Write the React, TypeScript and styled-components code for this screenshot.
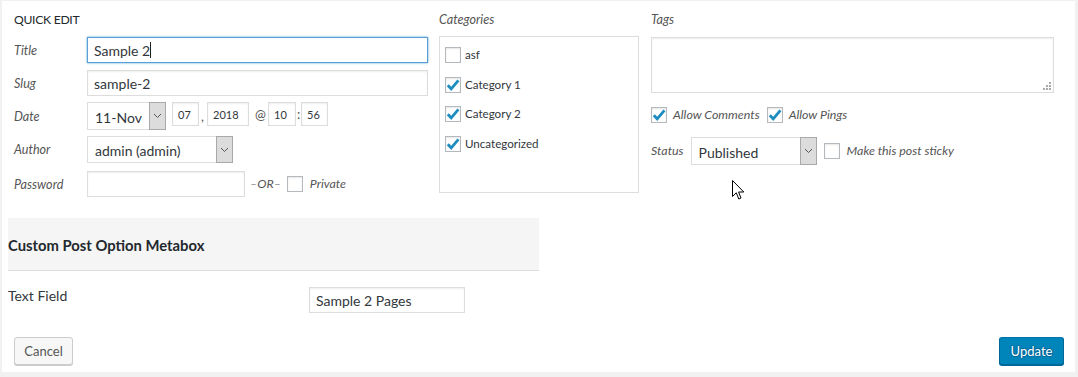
import React from "react";
import styled, { createGlobalStyle, css } from "styled-components";

const GlobalStyle = createGlobalStyle`
  html, body { margin: 0; padding: 0; background: #f1f1f1; }
  body { font-family: Lato, "Noto Sans", sans-serif; color: #444; }
  * { box-sizing: border-box; }
`;

const Panel = styled.div`
  position: relative;
  margin: 1px 0 0 2px;
  width: 1073px;
  height: 371px;
  background: #fff;
  display: flex;
  flex-direction: column;
`;

const TopSection = styled.div`
  display: flex;
  padding: 10px 0 0 12px;
`;

const Column = styled.div<{ $w: number; $ml?: number }>`
  width: ${(p) => p.$w}px;
  margin-left: ${(p) => p.$ml ?? 0}px;
  display: flex;
  flex-direction: column;
`;

const Heading = styled.div<{ $italic?: boolean; $mb?: number }>`
  height: 18px;
  line-height: 18px;
  font-size: ${(p) => (p.$italic ? "12.6px" : "12.2px")};
  letter-spacing: ${(p) => (p.$italic ? "0" : "-0.3px")};
  margin-bottom: ${(p) => p.$mb ?? 8}px;
  color: ${(p) => (p.$italic ? "#555" : "#23282d")};
  font-style: ${(p) => (p.$italic ? "italic" : "normal")};
`;

const FieldRow = styled.div<{ $mt?: number; $h: number }>`
  display: flex;
  align-items: center;
  height: ${(p) => p.$h}px;
  margin-top: ${(p) => p.$mt ?? 0}px;
`;

const DateRow = styled(FieldRow)`
  align-items: flex-start;
`;

const Label = styled.span`
  width: 73px;
  flex: none;
  font-size: 12.6px;
  font-style: italic;
  color: #555;
  line-height: 1;
  padding-top: 2px;
  align-self: center;
`;

const inputBase = css`
  border: 1px solid #ddd;
  box-shadow: inset 0 1px 2px rgba(0, 0, 0, 0.07);
  background: #fff;
  color: #32373c;
  outline: none;
  margin: 0;
  font-family: inherit;
`;

const TextInput = styled.input<{ $w: number; $h?: number; $focus?: boolean; $fs?: number; $pl?: number }>`
  ${inputBase};
  width: ${(p) => p.$w}px;
  height: ${(p) => p.$h ?? 26}px;
  font-size: ${(p) => p.$fs ?? 14}px;
  padding: 0 0 0 ${(p) => p.$pl ?? 6}px;
  flex: none;
  ${(p) =>
    p.$focus &&
    css`
      border-color: #5b9dd9;
      box-shadow: 0 0 2px rgba(30, 140, 190, 0.8);
    `}
`;

const FocusWrap = styled.div`
  position: relative;
  display: flex;
`;

const Caret = styled.span`
  position: absolute;
  left: 63px;
  top: 5px;
  width: 1px;
  height: 16px;
  background: #222;
`;

const Select = styled.div<{ $w: number; $h: number }>`
  ${inputBase};
  width: ${(p) => p.$w}px;
  height: ${(p) => p.$h}px;
  flex: none;
  display: flex;
  align-items: stretch;
  font-size: 14px;
  box-shadow: none;
`;

const SelectValue = styled.span`
  flex: 1;
  display: flex;
  align-items: center;
  padding: 2px 0 0 7px;
  white-space: nowrap;
  color: #32373c;
`;

const ArrowBox = styled.span`
  width: 17px;
  flex: none;
  background: #dcdcdc;
  border: 1px solid #a9a9a9;
  margin: -1px -1px -1px 0;
  display: flex;
  align-items: center;
  justify-content: center;
`;

const Sep = styled.span<{ $w: number; $pl?: number; $pt?: number }>`
  width: ${(p) => p.$w}px;
  flex: none;
  padding-left: ${(p) => p.$pl ?? 0}px;
  padding-top: ${(p) => p.$pt ?? 0}px;
  font-size: 13px;
  color: #555;
  line-height: 24px;
`;

const Inline = styled.span<{ $ml?: number; $mr?: number; $italic?: boolean }>`
  margin-left: ${(p) => p.$ml ?? 0}px;
  margin-right: ${(p) => p.$mr ?? 0}px;
  font-size: 12.4px;
  font-style: ${(p) => (p.$italic ? "italic" : "normal")};
  color: #555;
  white-space: nowrap;
  line-height: 1;
`;

const Box = styled.span`
  width: 16px;
  height: 16px;
  flex: none;
  border: 1px solid #b4b9be;
  background: #fff;
  box-shadow: inset 0 1px 2px rgba(0, 0, 0, 0.1);
  display: flex;
  align-items: center;
  justify-content: center;
`;

const CatBox = styled.div`
  width: 200px;
  height: 157px;
  border: 1px solid #ddd;
  padding: 10px 0 0 5px;
  display: flex;
  flex-direction: column;
  gap: 13.5px;
`;

const CatItem = styled.div`
  display: flex;
  align-items: center;
  height: 16px;
  gap: 4px;
  font-size: 11.6px;
  color: #32373c;
  line-height: 1;
`;

const TagsArea = styled.div`
  ${inputBase};
  position: relative;
  width: 403px;
  height: 56px;
`;

const Grip = styled.svg`
  position: absolute;
  right: 2px;
  bottom: 2px;
`;

const OptRow = styled.div<{ $mt: number; $h: number }>`
  display: flex;
  align-items: center;
  height: ${(p) => p.$h}px;
  margin-top: ${(p) => p.$mt}px;
`;

const Metabox = styled.div`
  margin: 21px 0 0 6px;
  width: 531px;
  height: 53px;
  background: #f5f5f5;
  border-bottom: 1px solid #ddd;
  display: flex;
  align-items: center;
  padding-top: 1px;
  font-size: 14.8px;
  font-weight: 700;
  color: #23282d;
`;

const MetaRow = styled.div`
  display: flex;
  align-items: flex-start;
  margin: 16px 0 0 6px;
`;

const MetaLabel = styled.span`
  width: 301px;
  flex: none;
  font-size: 14px;
  line-height: 18px;
  color: #32373c;
`;

const Buttons = styled.div`
  display: flex;
  justify-content: space-between;
  margin-top: 24px;
  padding: 0 11px 0 12px;
`;

const Button = styled.button<{ $primary?: boolean; $w: number }>`
  width: ${(p) => p.$w}px;
  height: 28px;
  padding: 0;
  font-family: inherit;
  font-size: 13px;
  border-radius: 3px;
  border: 1px solid #ccc;
  background: #f7f7f7;
  color: #555;
  box-shadow: 0 1px 0 #ccc;
  ${(p) =>
    p.$primary &&
    css`
      background: #0085ba;
      border-color: #0073aa #006799 #006799;
      color: #fff;
      box-shadow: 0 1px 0 #006799;
      text-shadow: 0 -1px 1px #006799, 1px 0 1px #006799, 0 1px 1px #006799, -1px 0 1px #006799;
    `}
`;

const Cursor = styled.svg`
  position: absolute;
  left: 730px;
  top: 179px;
`;

const Chevron = () => (
  <svg width="9" height="6" viewBox="0 0 9 6">
    <path d="M1 1 L4.5 4.5 L8 1" fill="none" stroke="#555" strokeWidth="1" />
  </svg>
);

const Check = ({ checked }: { checked?: boolean }) => (
  <Box>
    {checked && (
      <svg width="14" height="14" viewBox="0 0 14 14">
        <path d="M1.8 7.2 L5.2 10.8 L12.4 2.4" fill="none" stroke="#1e8cbe" strokeWidth="2.8" />
      </svg>
    )}
  </Box>
);

const SelectBox = ({ value, w, h }: { value: string; w: number; h: number }) => (
  <Select $w={w} $h={h}>
    <SelectValue>{value}</SelectValue>
    <ArrowBox>
      <Chevron />
    </ArrowBox>
  </Select>
);

export default function App() {
  return (
    <>
      <GlobalStyle />
      <Panel>
        <TopSection>
          <Column $w={414}>
            <Heading>QUICK EDIT</Heading>
            <FieldRow $h={26}>
              <Label>Title</Label>
              <FocusWrap>
                <TextInput $w={341} $focus readOnly value="Sample 2" />
                <Caret />
              </FocusWrap>
            </FieldRow>
            <FieldRow $h={26} $mt={7}>
              <Label>Slug</Label>
              <TextInput $w={341} readOnly value="sample-2" />
            </FieldRow>
            <DateRow $h={28} $mt={6}>
              <Label>Date</Label>
              <SelectBox value="11-Nov" w={79} h={28} />
              <Sep $w={6} />
              <TextInput $w={27} $h={24} $fs={11} $pl={5} readOnly value="07" />
              <Sep $w={8} $pl={2} $pt={2}>,</Sep>
              <TextInput $w={42} $h={24} $fs={11} $pl={5} readOnly value="2018" />
              <Sep $w={19} $pl={6}>@</Sep>
              <TextInput $w={28} $h={24} $fs={11} $pl={5} readOnly value="10" />
              <Sep $w={5} $pl={1}>:</Sep>
              <TextInput $w={27} $h={24} $fs={11} $pl={5} readOnly value="56" />
            </DateRow>
            <FieldRow $h={27} $mt={6}>
              <Label>Author</Label>
              <SelectBox value="admin (admin)" w={146} h={27} />
            </FieldRow>
            <FieldRow $h={26} $mt={8}>
              <Label>Password</Label>
              <TextInput $w={158} readOnly value="" />
              <Inline $ml={5} $mr={6} $italic>
                –OR–
              </Inline>
              <Check />
              <Inline $ml={7} $italic>
                Private
              </Inline>
            </FieldRow>
          </Column>

          <Column $w={200} $ml={11}>
            <Heading $italic $mb={7}>
              Categories
            </Heading>
            <CatBox>
              <CatItem>
                <Check />
                asf
              </CatItem>
              <CatItem>
                <Check checked />
                Category 1
              </CatItem>
              <CatItem>
                <Check checked />
                Category 2
              </CatItem>
              <CatItem>
                <Check checked />
                Uncategorized
              </CatItem>
            </CatBox>
          </Column>

          <Column $w={403} $ml={12}>
            <Heading $italic>Tags</Heading>
            <TagsArea>
              <Grip width="8" height="8" viewBox="0 0 8 8">
                <rect x="6" y="0" width="2" height="2" fill="#aaa" />
                <rect x="3" y="3" width="2" height="2" fill="#aaa" />
                <rect x="6" y="3" width="2" height="2" fill="#aaa" />
                <rect x="0" y="6" width="2" height="2" fill="#aaa" />
                <rect x="3" y="6" width="2" height="2" fill="#aaa" />
                <rect x="6" y="6" width="2" height="2" fill="#aaa" />
              </Grip>
            </TagsArea>
            <OptRow $mt={14} $h={16}>
              <Check checked />
              <Inline $ml={6} $mr={7} $italic>
                Allow Comments
              </Inline>
              <Check checked />
              <Inline $ml={6} $italic>
                Allow Pings
              </Inline>
            </OptRow>
            <OptRow $mt={14} $h={28}>
              <Inline $mr={7} $italic>
                Status
              </Inline>
              <SelectBox value="Published" w={126} h={28} />
              <Inline $ml={7} />
              <Check />
              <Inline $ml={7} $italic>
                Make this post sticky
              </Inline>
            </OptRow>
          </Column>
        </TopSection>

        <Metabox>Custom Post Option Metabox</Metabox>
        <MetaRow>
          <MetaLabel>Text Field</MetaLabel>
          <TextInput $w={156} readOnly value="Sample 2 Pages" />
        </MetaRow>

        <Buttons>
          <Button $w={59}>Cancel</Button>
          <Button $w={65} $primary>
            Update
          </Button>
        </Buttons>

        <Cursor width="13" height="21" viewBox="0 0 13 21">
          <path
            d="M0.5 0.5 L0.5 16.5 L4.3 12.8 L6.8 19 L9 18 L6.6 12 L11.8 12 Z"
            fill="#fff"
            stroke="#000"
            strokeWidth="1"
            strokeLinejoin="miter"
          />
        </Cursor>
      </Panel>
    </>
  );
}
